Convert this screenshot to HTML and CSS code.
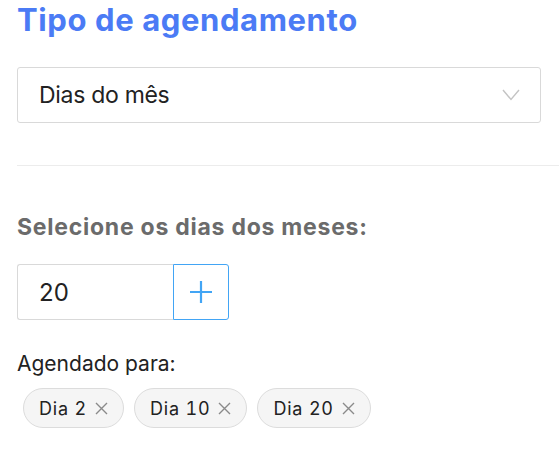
FILE: index.html
```html
<!DOCTYPE html>
<html lang="pt-BR">
<head>
<meta charset="utf-8">
<title>Tipo de agendamento</title>
<link rel="stylesheet" href="styles.css">
</head>
<body>
<main class="page">
  <h1 class="title">Tipo de agendamento</h1>
  <div class="select">
    <span class="select-value">Dias do mês</span>
    <svg class="chevron" width="18" height="12" viewBox="0 0 18 12" aria-hidden="true"><path d="M1 1 L9 10.5 L17 1" fill="none" stroke="#c4c4c4" stroke-width="1.4"/></svg>
  </div>
  <hr class="divider">
  <h2 class="label">Selecione os dias dos meses:</h2>
  <div class="input-row">
    <div class="day-input">20</div>
    <button class="add-btn" type="button" aria-label="Adicionar">
      <svg width="22" height="22" viewBox="0 0 22 22" aria-hidden="true"><path d="M11 0 V22 M0 11 H22" stroke="#42a5f5" stroke-width="2.2"/></svg>
    </button>
  </div>
  <p class="scheduled">Agendado para:</p>
  <div class="chips">
    <span class="chip">Dia 2<svg class="x" width="13" height="13" viewBox="0 0 13 13" aria-hidden="true"><path d="M1 1 L12 12 M12 1 L1 12" stroke="#8a8a8a" stroke-width="1.4"/></svg></span>
    <span class="chip">Dia 10<svg class="x" width="13" height="13" viewBox="0 0 13 13" aria-hidden="true"><path d="M1 1 L12 12 M12 1 L1 12" stroke="#8a8a8a" stroke-width="1.4"/></svg></span>
    <span class="chip">Dia 20<svg class="x" width="13" height="13" viewBox="0 0 13 13" aria-hidden="true"><path d="M1 1 L12 12 M12 1 L1 12" stroke="#8a8a8a" stroke-width="1.4"/></svg></span>
  </div>
</main>
</body>
</html>
```
FILE: styles.css
```css
html, body {
  margin: 0;
  padding: 0;
  background: #ffffff;
}
body {
  font-family: Inter, Lato, "Liberation Sans", sans-serif;
  color: #222222;
  overflow: hidden;
}
.page {
  padding: 0 0 0 17px;
}
.title {
  margin: 0;
  font-size: 31px;
  line-height: 40px;
  font-weight: 700;
  letter-spacing: 0.6px;
  color: #4b7bf5;
}
.select {
  margin-top: 27px;
  width: 524px;
  height: 56px;
  box-sizing: border-box;
  border: 1px solid #d9d9d9;
  border-radius: 3px;
  display: flex;
  align-items: center;
  justify-content: space-between;
  padding: 0 20px 0 21px;
}
.select-value {
  font-size: 23px;
  line-height: 30px;
  letter-spacing: -0.3px;
}
.chevron {
  display: block;
}
.divider {
  margin: 42px 0 0 0;
  border: 0;
  height: 1px;
  background: #ececec;
}
.label {
  margin: 46px 0 0 0;
  font-size: 23px;
  line-height: 30px;
  font-weight: 700;
  letter-spacing: 0.75px;
  color: #6b6b6b;
}
.input-row {
  margin-top: 22px;
  display: flex;
}
.day-input {
  width: 156px;
  height: 56px;
  box-sizing: border-box;
  border: 1px solid #d9d9d9;
  border-right: 0;
  border-radius: 3px 0 0 3px;
  display: flex;
  align-items: center;
  padding-left: 21px;
  font-size: 24px;
}
.add-btn {
  width: 56px;
  height: 56px;
  box-sizing: border-box;
  border: 1px solid #42a5f5;
  border-radius: 0 3px 3px 0;
  background: #ffffff;
  display: flex;
  align-items: center;
  justify-content: center;
  padding: 0;
}
.add-btn svg {
  display: block;
}
.scheduled {
  margin: 30px 0 0 0;
  font-size: 21px;
  line-height: 28px;
}
.chips {
  margin: 10px 0 0 6px;
  display: flex;
  gap: 10px;
}
.chip {
  height: 40px;
  box-sizing: border-box;
  border: 1px solid #dcdcdc;
  border-radius: 20px;
  background: #f5f5f5;
  display: flex;
  align-items: center;
  padding: 0 15px 0 15px;
  font-size: 18px;
  letter-spacing: 0.8px;
  font-variant-numeric: tabular-nums;
}
.chip .x {
  display: block;
  margin-left: 8px;
}
```
